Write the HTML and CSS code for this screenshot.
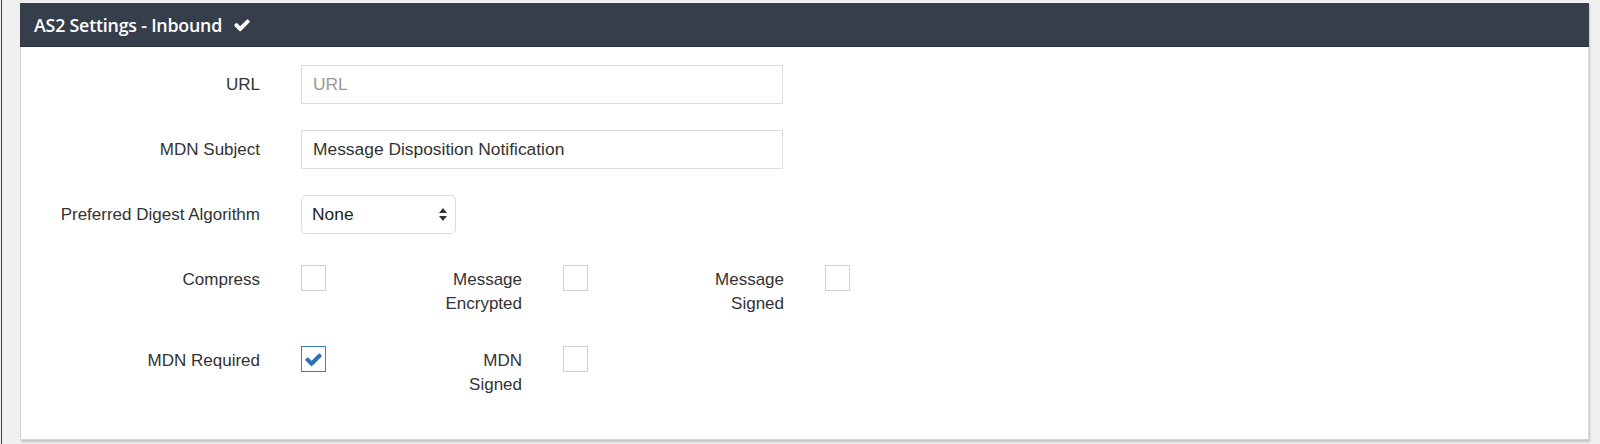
FILE: index.html
```html
<!DOCTYPE html>
<html lang="en">
<head>
<meta charset="utf-8">
<title>AS2 Settings - Inbound</title>
<link rel="stylesheet" href="styles.css">
</head>
<body>
<div class="page">
  <section class="panel">
    <header class="panel-heading">
      <h2 class="panel-title">AS2 Settings - Inbound</h2>
      <svg class="title-check" viewBox="0 0 1792 1792" aria-hidden="true"><path d="M1671 566q0 40-28 68l-724 724-136 136q-28 28-68 28t-68-28l-136-136-362-362q-28-28-28-68t28-68l136-136q28-28 68-28t68 28l294 295 656-657q28-28 68-28t68 28l136 136q28 28 28 68z"/></svg>
    </header>
    <div class="panel-body">
      <div class="form-row row-url">
        <label class="label main-label" for="url">URL</label>
        <input class="text-input" id="url" type="text" placeholder="URL">
      </div>
      <div class="form-row row-subject">
        <label class="label main-label" for="subject">MDN Subject</label>
        <input class="text-input" id="subject" type="text" value="Message Disposition Notification">
      </div>
      <div class="form-row row-digest">
        <label class="label main-label">Preferred Digest Algorithm</label>
        <div class="select">
          <span class="select-value">None</span>
          <svg class="select-arrows" viewBox="0 0 8 13" aria-hidden="true"><path d="M4 0 L8 5 L0 5 Z M0 8 L8 8 L4 13 Z"/></svg>
        </div>
      </div>
      <div class="form-row check-row row-compress">
        <span class="label main-label">Compress</span>
        <span class="check-cell"><span class="checkbox"></span></span>
        <span class="label sub-label">Message Encrypted</span>
        <span class="check-cell"><span class="checkbox"></span></span>
        <span class="label sub-label">Message Signed</span>
        <span class="check-cell"><span class="checkbox"></span></span>
      </div>
      <div class="form-row check-row row-mdn">
        <span class="label main-label">MDN Required</span>
        <span class="check-cell"><span class="checkbox checked"><svg viewBox="0 0 1792 1792" aria-hidden="true"><path d="M1671 566q0 40-28 68l-724 724-136 136q-28 28-68 28t-68-28l-136-136-362-362q-28-28-28-68t28-68l136-136q28-28 68-28t68 28l294 295 656-657q28-28 68-28t68 28l136 136q28 28 28 68z"/></svg></span></span>
        <span class="label sub-label">MDN Signed</span>
        <span class="check-cell"><span class="checkbox"></span></span>
      </div>
    </div>
  </section>
</div>
</body>
</html>
```

FILE: styles.css
```css
html, body {
  margin: 0;
  padding: 0;
  background: #f0f0f0;
}

body {
  font-family: "Liberation Sans", Arial, sans-serif;
  color: #333;
}

.page {
  margin-left: 1px;
  border-left: 1px solid #3a404c;
  padding: 3px 11px 0 18px;
  height: 441px;
}

.panel {
  background: #fff;
  border: 1px solid #d6d6d6;
  border-top: none;
  box-shadow: 1px 2px 2px rgba(0, 0, 0, 0.18);
  height: 437px;
  box-sizing: border-box;
}

.panel-heading {
  display: flex;
  align-items: center;
  margin: 0 -1px;
  padding: 1px 14px 0;
  box-sizing: border-box;
  height: 44px;
  background: #373e4b;
  border-bottom: 1px solid #2b313c;
}

.panel-title {
  margin: 0;
  font-family: "Open Sans", sans-serif;
  font-weight: 600;
  font-size: 17.8px;
  letter-spacing: -0.2px;
  color: #fff;
}

.title-check {
  width: 18px;
  height: 18px;
  margin-left: 11px;
  fill: #fff;
}

.panel-body {
  padding: 18px 0 0 0;
}

.form-row {
  display: flex;
  align-items: center;
}

.label {
  font-size: 17px;
  line-height: 24px;
  text-align: right;
  color: #333;
}

.main-label {
  width: 239px;
  flex: none;
}

.text-input {
  margin-left: 41px;
  width: 482px;
  height: 39px;
  box-sizing: border-box;
  border: 1px solid #dcdcdc;
  border-radius: 0;
  padding: 0 11px;
  font-family: "Liberation Sans", Arial, sans-serif;
  font-size: 17.4px;
  color: #333;
  outline: none;
}

.text-input::placeholder {
  color: #999;
}

.row-url { margin-bottom: 26px; }
.row-subject { margin-bottom: 26px; }
.row-digest { margin-bottom: 31px; }
.row-compress { margin-bottom: 30px; }

.select {
  margin-left: 41px;
  width: 155px;
  height: 39px;
  box-sizing: border-box;
  border: 1px solid #dcdcdc;
  border-radius: 5px;
  display: flex;
  align-items: center;
  justify-content: space-between;
  padding: 0 8px 0 10px;
  font-size: 17.4px;
  color: #222;
}

.select-arrows {
  width: 8px;
  height: 13px;
  fill: #333;
}

.check-row {
  align-items: flex-start;
}

.check-row .label {
  margin-top: 3px;
}

.check-cell {
  flex: none;
  width: 136px;
  margin-left: 41px;
  display: flex;
}

.sub-label {
  width: 85px;
  flex: none;
}

.checkbox {
  width: 25px;
  height: 26px;
  box-sizing: border-box;
  border: 1px solid #cfcfcf;
  background: #fff;
  display: flex;
  align-items: center;
  justify-content: center;
}

.checkbox.checked {
  border-color: #3c7fc0;
}

.checkbox.checked svg {
  width: 19px;
  height: 19px;
  fill: #2f72b4;
}
```
